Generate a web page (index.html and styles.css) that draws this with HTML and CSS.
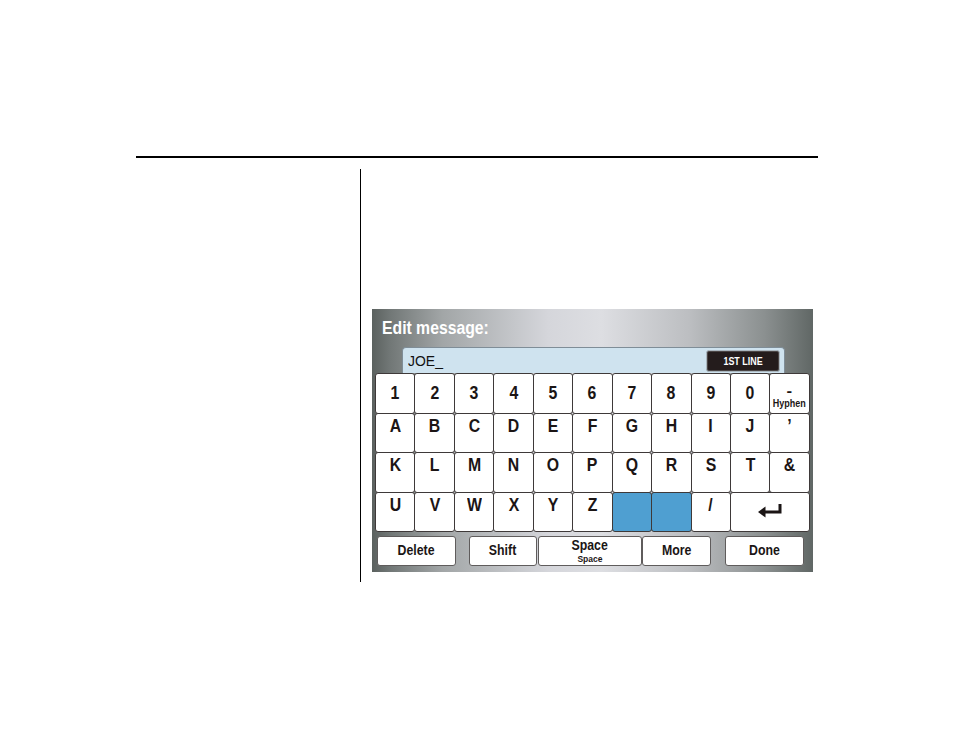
FILE: index.html
```html
<!DOCTYPE html>
<html>
<head>
<meta charset="utf-8">
<link rel="stylesheet" href="styles.css">
</head>
<body>
<div class="page">
  <div class="rule"></div>
  <div class="content">
    <div class="left-col"></div>
    <div class="right-col">
      <div class="screen">
        <div class="title"><span class="sq90">Edit message:</span></div>
        <div class="field">
          <span class="field-text">JOE_</span>
          <div class="line-btn"><span class="sq85">1ST LINE</span></div>
        </div>
        <div class="keys">
          <div class="key r1"><span class="lbl">1</span></div>
          <div class="key r1"><span class="lbl">2</span></div>
          <div class="key r1"><span class="lbl">3</span></div>
          <div class="key r1"><span class="lbl">4</span></div>
          <div class="key r1"><span class="lbl">5</span></div>
          <div class="key r1"><span class="lbl">6</span></div>
          <div class="key r1"><span class="lbl">7</span></div>
          <div class="key r1"><span class="lbl">8</span></div>
          <div class="key r1"><span class="lbl">9</span></div>
          <div class="key r1"><span class="lbl">0</span></div>
          <div class="key r1 hyphen"><span class="lbl dash">-</span><span class="lbl small">Hyphen</span></div>

          <div class="key"><span class="lbl">A</span></div>
          <div class="key"><span class="lbl">B</span></div>
          <div class="key"><span class="lbl">C</span></div>
          <div class="key"><span class="lbl">D</span></div>
          <div class="key"><span class="lbl">E</span></div>
          <div class="key"><span class="lbl">F</span></div>
          <div class="key"><span class="lbl">G</span></div>
          <div class="key"><span class="lbl">H</span></div>
          <div class="key"><span class="lbl">I</span></div>
          <div class="key"><span class="lbl">J</span></div>
          <div class="key"><span class="lbl">’</span></div>

          <div class="key"><span class="lbl">K</span></div>
          <div class="key"><span class="lbl">L</span></div>
          <div class="key"><span class="lbl">M</span></div>
          <div class="key"><span class="lbl">N</span></div>
          <div class="key"><span class="lbl">O</span></div>
          <div class="key"><span class="lbl">P</span></div>
          <div class="key"><span class="lbl">Q</span></div>
          <div class="key"><span class="lbl">R</span></div>
          <div class="key"><span class="lbl">S</span></div>
          <div class="key"><span class="lbl">T</span></div>
          <div class="key"><span class="lbl">&amp;</span></div>

          <div class="key"><span class="lbl">U</span></div>
          <div class="key"><span class="lbl">V</span></div>
          <div class="key"><span class="lbl">W</span></div>
          <div class="key"><span class="lbl">X</span></div>
          <div class="key"><span class="lbl">Y</span></div>
          <div class="key"><span class="lbl">Z</span></div>
          <div class="key blue"></div>
          <div class="key blue"></div>
          <div class="key"><span class="lbl">/</span></div>
          <div class="key enter">
            <svg class="enter-icon" width="24" height="15" viewBox="0 0 24 15">
              <path d="M22 0 V8 H6" fill="none" stroke="#1b1515" stroke-width="3"/>
              <path d="M0 8 L7.5 2.5 L7.5 13.5 Z" fill="#1b1515"/>
            </svg>
          </div>
        </div>
        <div class="bottom">
          <div class="btn b-delete"><span class="blbl">Delete</span></div>
          <div class="btn b-shift"><span class="blbl">Shift</span></div>
          <div class="btn b-space"><span class="blbl">Space</span><span class="blbl tiny">Space</span></div>
          <div class="btn b-more"><span class="blbl">More</span></div>
          <div class="btn b-done"><span class="blbl">Done</span></div>
        </div>
      </div>
    </div>
  </div>
</div>
</body>
</html>
```

FILE: styles.css
```css
html, body {
  margin: 0;
  padding: 0;
  background: #ffffff;
}

.page {
  padding-top: 156px;
  margin-left: 136px;
  width: 682px;
  font-family: "Liberation Sans", Arial, sans-serif;
}

.rule {
  height: 2px;
  background: #000;
}

.content {
  display: flex;
  margin-top: 11px;
}

.left-col {
  width: 224px;
  flex: none;
}

.right-col {
  border-left: 1px solid #000;
  height: 413px;
  box-sizing: border-box;
  padding-left: 11px;
  padding-top: 140px;
}

.screen {
  width: 441px;
  height: 263px;
  box-sizing: border-box;
  padding-top: 9px;
  display: flex;
  flex-direction: column;
  background: linear-gradient(to right,
    #5b615f 0%,
    #717776 4%,
    #a2a6a7 16%,
    #d5d6db 40%,
    #dddee2 52%,
    #bcbec1 72%,
    #8b9090 89%,
    #606765 100%);
}

.title {
  margin-left: 10px;
  height: 20px;
  line-height: 20px;
  font-size: 17.5px;
  font-weight: bold;
  color: #ffffff;
}

.sq90 {
  display: inline-block;
  transform: scaleX(0.9);
  transform-origin: left center;
}

.sq85 {
  display: inline-block;
  transform: scaleX(0.85);
}

.field {
  margin-top: 9px;
  margin-left: 30px;
  width: 383px;
  height: 26px;
  box-sizing: border-box;
  border: 1px solid #7f8d97;
  border-bottom: none;
  border-radius: 4px 4px 0 0;
  background: #cfe3ef;
  display: flex;
  align-items: center;
  justify-content: space-between;
  padding: 0 4px 0 5px;
}

.field-text {
  display: inline-block;
  font-size: 15px;
  line-height: 15px;
  color: #111;
  transform: scaleX(0.93);
  transform-origin: left center;
}

.line-btn {
  width: 74px;
  height: 22px;
  box-sizing: border-box;
  border: 1px solid #aab6be;
  box-shadow: inset 0 0 0 1px #4b4545;
  border-radius: 3px;
  background: #241c1c;
  color: #fff;
  font-size: 10.5px;
  font-weight: bold;
  display: flex;
  align-items: center;
  justify-content: center;
}

.keys {
  margin-left: 3px;
  display: grid;
  grid-template-columns: repeat(11, 39.45px);
  grid-template-rows: repeat(4, 39.5px);
  width: 434px;
}

.key {
  margin: 0 -1px -1px 0;
  border: 1px solid #3e3939;
  border-radius: 3px;
  background: #ffffff;
  display: flex;
  justify-content: center;
  align-items: flex-start;
  padding-top: 3px;
  box-sizing: border-box;
}

.key.r1 {
  align-items: center;
  padding-top: 0;
}

.key.hyphen {
  flex-direction: column;
  padding-top: 7px;
}

.key.blue {
  background: #4f9fd1;
}

.key.enter {
  grid-column: span 2;
  padding-top: 11px;
}

.lbl {
  display: inline-block;
  font-size: 18px;
  line-height: 18px;
  font-weight: bold;
  color: #1b1515;
  transform: scaleX(0.88);
}

.lbl.dash {
  font-size: 14px;
  line-height: 14px;
  transform: scaleX(1.2);
}

.lbl.small {
  font-size: 10px;
  line-height: 11px;
  transform: scaleX(0.9);
}

.bottom {
  display: flex;
  margin-top: 5px;
  height: 30px;
  padding-left: 5px;
}

.btn {
  height: 30px;
  box-sizing: border-box;
  border: 1px solid #5f5c5c;
  border-radius: 3px;
  background: #ffffff;
  display: flex;
  flex-direction: column;
  align-items: center;
  justify-content: center;
  padding-bottom: 2px;
}

.blbl {
  display: inline-block;
  font-size: 14px;
  line-height: 14px;
  font-weight: bold;
  color: #1b1515;
  transform: scaleX(0.88);
}

.blbl.tiny {
  font-size: 9.5px;
  line-height: 10px;
  margin-top: 1.5px;
  transform: scaleX(0.9);
}

.b-delete { width: 79px; }
.b-shift { width: 68px; margin-left: 13px; }
.b-space { width: 104px; margin-left: 1px; padding-bottom: 0; }
.b-more { width: 69px; }
.b-done { width: 79px; margin-left: 14px; }
```
